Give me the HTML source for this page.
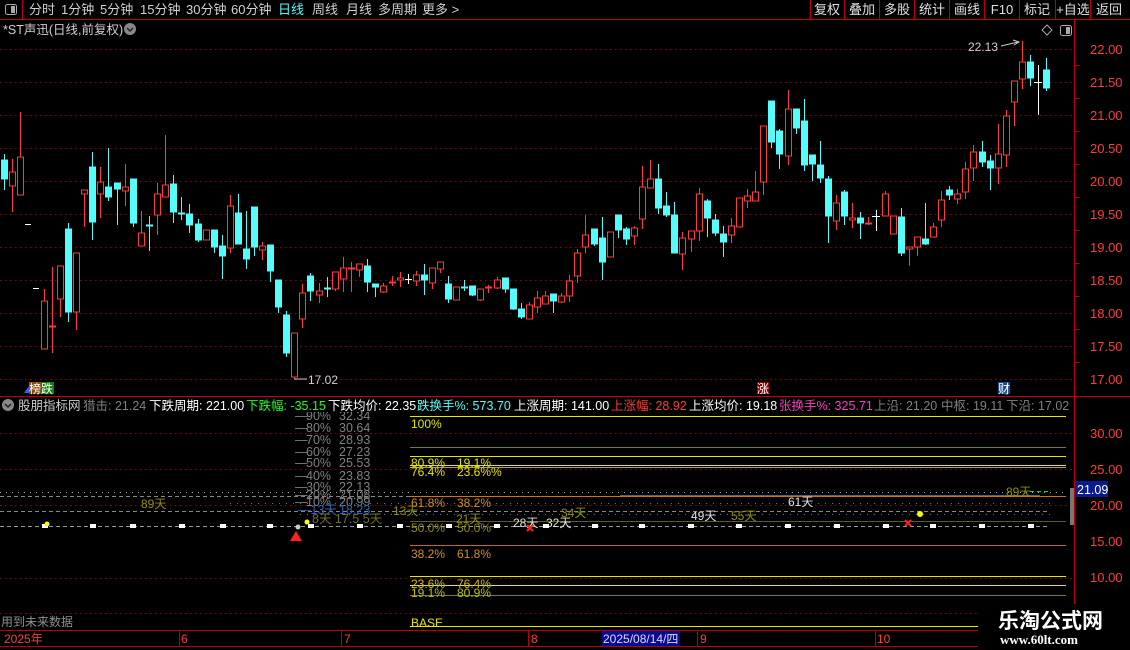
<!DOCTYPE html>
<html><head><meta charset="utf-8"><style>
html,body{margin:0;padding:0;background:#000;width:1130px;height:650px;overflow:hidden}
svg{display:block}
text{font-family:"Liberation Sans","Noto Sans CJK SC",sans-serif;}
</style></head><body>
<svg width="1130" height="650" viewBox="0 0 1130 650" xmlns="http://www.w3.org/2000/svg">
<rect width="1130" height="650" fill="#000"/>
<!-- top bar -->
<line x1="0" y1="19.5" x2="1130" y2="19.5" stroke="#c00000"/>
<line x1="22.5" y1="0" x2="22.5" y2="19" stroke="#c00000"/>
<rect x="5.5" y="4.5" width="11" height="10" rx="2" fill="none" stroke="#aaa"/>
<rect x="11" y="6" width="4" height="7" fill="#aaa"/>
<g font-size="13" fill="#d0d0d0">
<text x="29" y="14">分时</text><text x="61" y="14">1分钟</text><text x="100" y="14">5分钟</text><text x="140" y="14">15分钟</text><text x="186" y="14">30分钟</text><text x="231" y="14">60分钟</text><text x="278" y="14" fill="#54fcfc">日线</text><text x="312" y="14">周线</text><text x="346" y="14">月线</text><text x="378" y="14">多周期</text><text x="422" y="14">更多 &gt;</text>
</g>
<g stroke="#c00000"><line x1="810.5" y1="0" x2="810.5" y2="19"/><line x1="844.5" y1="0" x2="844.5" y2="19"/><line x1="879.5" y1="0" x2="879.5" y2="19"/><line x1="914.5" y1="0" x2="914.5" y2="19"/><line x1="949.5" y1="0" x2="949.5" y2="19"/><line x1="984.5" y1="0" x2="984.5" y2="19"/><line x1="1019.5" y1="0" x2="1019.5" y2="19"/><line x1="1055.5" y1="0" x2="1055.5" y2="19"/><line x1="1090.5" y1="0" x2="1090.5" y2="19"/></g>
<g font-size="13" fill="#e0e0e0" text-anchor="middle">
<text x="827" y="14">复权</text><text x="862" y="14">叠加</text><text x="897" y="14">多股</text><text x="932" y="14">统计</text><text x="967" y="14">画线</text><text x="1002" y="14">F10</text><text x="1037" y="14">标记</text><text x="1073" y="14">+自选</text><text x="1109" y="14">返回</text>
</g>
<text x="3" y="34" font-size="12.5" fill="#d0d0d0">*ST声迅(日线,前复权)</text>
<circle cx="130" cy="29" r="6" fill="#888"/><path d="M127 28 L130 31 L133 28" stroke="#222" stroke-width="1.5" fill="none"/>
<path d="M1047 25 L1052 30 L1047 35 L1042 30 Z" fill="none" stroke="#aaa"/>
<rect x="1060.5" y="25.5" width="11" height="10" rx="2" fill="none" stroke="#aaa"/><rect x="1066" y="27" width="4" height="7" fill="#aaa"/>
<!-- axis -->
<line x1="1074.5" y1="20" x2="1074.5" y2="646" stroke="#c00000"/>
<g stroke="#900" stroke-dasharray="1.5,3.5">
<line x1="0" y1="49.5" x2="1074" y2="49.5"/><line x1="0" y1="82.5" x2="1074" y2="82.5"/><line x1="0" y1="115.5" x2="1074" y2="115.5"/><line x1="0" y1="148.5" x2="1074" y2="148.5"/><line x1="0" y1="181.5" x2="1074" y2="181.5"/><line x1="0" y1="214.5" x2="1074" y2="214.5"/><line x1="0" y1="247.5" x2="1074" y2="247.5"/><line x1="0" y1="280.5" x2="1074" y2="280.5"/><line x1="0" y1="313.5" x2="1074" y2="313.5"/><line x1="0" y1="346.5" x2="1074" y2="346.5"/><line x1="0" y1="379.5" x2="1074" y2="379.5"/>
<line x1="0" y1="433.5" x2="1074" y2="433.5"/><line x1="0" y1="469.5" x2="1074" y2="469.5"/><line x1="0" y1="505.5" x2="1074" y2="505.5"/><line x1="0" y1="578.5" x2="1074" y2="578.5"/><line x1="0" y1="613.5" x2="1074" y2="613.5"/>
</g>
<g font-size="13" fill="#ff3c3c">
<text x="1090" y="54">22.00</text><text x="1090" y="87">21.50</text><text x="1090" y="120">21.00</text><text x="1090" y="153">20.50</text><text x="1090" y="186">20.00</text><text x="1090" y="219">19.50</text><text x="1090" y="252">19.00</text><text x="1090" y="285">18.50</text><text x="1090" y="318">18.00</text><text x="1090" y="351">17.50</text><text x="1090" y="384">17.00</text>
<text x="1090" y="438">30.00</text><text x="1090" y="474">25.00</text><text x="1090" y="510">20.00</text><text x="1090" y="546">15.00</text><text x="1090" y="582">10.00</text>
</g>
<g stroke="#c00000"><line x1="1074" y1="65.5" x2="1079" y2="65.5"/><line x1="1074" y1="98.5" x2="1079" y2="98.5"/><line x1="1074" y1="131.5" x2="1079" y2="131.5"/><line x1="1074" y1="164.5" x2="1079" y2="164.5"/><line x1="1074" y1="197.5" x2="1079" y2="197.5"/><line x1="1074" y1="230.5" x2="1079" y2="230.5"/><line x1="1074" y1="263.5" x2="1079" y2="263.5"/><line x1="1074" y1="296.5" x2="1079" y2="296.5"/><line x1="1074" y1="329.5" x2="1079" y2="329.5"/><line x1="1074" y1="362.5" x2="1079" y2="362.5"/></g>
<!-- candles red -->
<g stroke="#ff3c3c" fill="#000" shape-rendering="crispEdges">
<line x1="12.5" y1="159" x2="12.5" y2="212"/><rect x="9.5" y="172" width="6" height="14"/>
<line x1="20.5" y1="112" x2="20.5" y2="195"/><rect x="17.5" y="157" width="6" height="38"/>
<line x1="44.5" y1="289" x2="44.5" y2="349"/><rect x="41.5" y="301" width="6" height="48"/>
<line x1="52.5" y1="267" x2="52.5" y2="353"/><rect x="49.5" y="326" width="6" height="1"/>
<line x1="60.5" y1="266" x2="60.5" y2="317"/><rect x="57.5" y="266" width="6" height="33"/>
<line x1="76.5" y1="253" x2="76.5" y2="330"/><rect x="73.5" y="253" width="6" height="59"/>
<line x1="84.5" y1="190" x2="84.5" y2="227"/><rect x="81.5" y="190" width="6" height="4"/>
<line x1="100.5" y1="167" x2="100.5" y2="218"/><rect x="97.5" y="182" width="6" height="12"/>
<line x1="125.5" y1="164" x2="125.5" y2="206"/><rect x="122.5" y="187" width="6" height="4"/>
<line x1="141.5" y1="211" x2="141.5" y2="246"/><rect x="138.5" y="233" width="6" height="13"/>
<line x1="157.5" y1="183" x2="157.5" y2="235"/><rect x="154.5" y="194" width="6" height="21"/>
<line x1="165.5" y1="135" x2="165.5" y2="197"/><rect x="162.5" y="185" width="6" height="12"/>
<line x1="206.5" y1="230" x2="206.5" y2="240"/><rect x="203.5" y="230" width="6" height="10"/>
<line x1="230.5" y1="195" x2="230.5" y2="253"/><rect x="227.5" y="206" width="6" height="42"/>
<line x1="262.5" y1="242" x2="262.5" y2="260"/><rect x="259.5" y="246" width="6" height="4"/>
<line x1="294.5" y1="333" x2="294.5" y2="379"/><rect x="291.5" y="333" width="6" height="44"/>
<line x1="302.5" y1="284" x2="302.5" y2="328"/><rect x="299.5" y="293" width="6" height="26"/>
<line x1="319.5" y1="283" x2="319.5" y2="303"/><rect x="316.5" y="291" width="6" height="4"/>
<line x1="335.5" y1="272" x2="335.5" y2="291"/><rect x="332.5" y="272" width="6" height="17"/>
<line x1="343.5" y1="257" x2="343.5" y2="292"/><rect x="340.5" y="268" width="6" height="11"/>
<line x1="351.5" y1="262" x2="351.5" y2="292"/><rect x="348.5" y="268" width="6" height="1"/>
<line x1="359.5" y1="264" x2="359.5" y2="277"/><rect x="356.5" y="264" width="6" height="6"/>
<line x1="383.5" y1="283" x2="383.5" y2="293"/><rect x="380.5" y="286" width="6" height="6"/>
<line x1="392.5" y1="276" x2="392.5" y2="286"/><rect x="389.5" y="282" width="6" height="1"/>
<line x1="400.5" y1="272" x2="400.5" y2="287"/><rect x="397.5" y="278" width="6" height="2"/>
<line x1="416.5" y1="271" x2="416.5" y2="286"/><rect x="413.5" y="275" width="6" height="6"/>
<line x1="432.5" y1="268" x2="432.5" y2="289"/><rect x="429.5" y="268" width="6" height="15"/>
<line x1="440.5" y1="262" x2="440.5" y2="273"/><rect x="437.5" y="262" width="6" height="7"/>
<line x1="456.5" y1="287" x2="456.5" y2="300"/><rect x="453.5" y="287" width="6" height="13"/>
<line x1="480.5" y1="289" x2="480.5" y2="301"/><rect x="477.5" y="289" width="6" height="11"/>
<line x1="488.5" y1="285" x2="488.5" y2="293"/><rect x="485.5" y="287" width="6" height="1"/>
<line x1="497.5" y1="277" x2="497.5" y2="289"/><rect x="494.5" y="280" width="6" height="8"/>
<line x1="529.5" y1="302" x2="529.5" y2="319"/><rect x="526.5" y="305" width="6" height="14"/>
<line x1="537.5" y1="291" x2="537.5" y2="313"/><rect x="534.5" y="298" width="6" height="9"/>
<line x1="545.5" y1="291" x2="545.5" y2="304"/><rect x="542.5" y="296" width="6" height="8"/>
<line x1="561.5" y1="293" x2="561.5" y2="303"/><rect x="558.5" y="296" width="6" height="6"/>
<line x1="569.5" y1="275" x2="569.5" y2="302"/><rect x="566.5" y="281" width="6" height="15"/>
<line x1="577.5" y1="249" x2="577.5" y2="283"/><rect x="574.5" y="253" width="6" height="23"/>
<line x1="585.5" y1="215" x2="585.5" y2="253"/><rect x="582.5" y="235" width="6" height="12"/>
<line x1="610.5" y1="232" x2="610.5" y2="257"/><rect x="607.5" y="232" width="6" height="25"/>
<line x1="634.5" y1="226" x2="634.5" y2="245"/><rect x="631.5" y="228" width="6" height="8"/>
<line x1="642.5" y1="166" x2="642.5" y2="229"/><rect x="639.5" y="187" width="6" height="32"/>
<line x1="650.5" y1="160" x2="650.5" y2="188"/><rect x="647.5" y="179" width="6" height="9"/>
<line x1="682.5" y1="232" x2="682.5" y2="270"/><rect x="679.5" y="238" width="6" height="16"/>
<line x1="691.5" y1="231" x2="691.5" y2="252"/><rect x="688.5" y="231" width="6" height="8"/>
<line x1="699.5" y1="188" x2="699.5" y2="241"/><rect x="696.5" y="194" width="6" height="37"/>
<line x1="731.5" y1="218" x2="731.5" y2="243"/><rect x="728.5" y="226" width="6" height="9"/>
<line x1="739.5" y1="198" x2="739.5" y2="227"/><rect x="736.5" y="198" width="6" height="29"/>
<line x1="747.5" y1="189" x2="747.5" y2="208"/><rect x="744.5" y="196" width="6" height="5"/>
<line x1="755.5" y1="171" x2="755.5" y2="201"/><rect x="752.5" y="192" width="6" height="9"/>
<line x1="763.5" y1="126" x2="763.5" y2="195"/><rect x="760.5" y="126" width="6" height="56"/>
<line x1="788.5" y1="90" x2="788.5" y2="165"/><rect x="785.5" y="109" width="6" height="47"/>
<line x1="836.5" y1="195" x2="836.5" y2="230"/><rect x="833.5" y="203" width="6" height="18"/>
<line x1="852.5" y1="203" x2="852.5" y2="228"/><rect x="849.5" y="218" width="6" height="2"/>
<line x1="868.5" y1="217" x2="868.5" y2="225"/><rect x="865.5" y="223" width="6" height="1"/>
<line x1="885.5" y1="191" x2="885.5" y2="216"/><rect x="882.5" y="194" width="6" height="22"/>
<line x1="893.5" y1="216" x2="893.5" y2="234"/><rect x="890.5" y="216" width="6" height="18"/>
<line x1="909.5" y1="247" x2="909.5" y2="266"/><rect x="906.5" y="247" width="6" height="2"/>
<line x1="917.5" y1="237" x2="917.5" y2="256"/><rect x="914.5" y="237" width="6" height="10"/>
<line x1="933.5" y1="223" x2="933.5" y2="237"/><rect x="930.5" y="227" width="6" height="10"/>
<line x1="941.5" y1="191" x2="941.5" y2="227"/><rect x="938.5" y="200" width="6" height="20"/>
<line x1="957.5" y1="189" x2="957.5" y2="204"/><rect x="954.5" y="194" width="6" height="5"/>
<line x1="965.5" y1="162" x2="965.5" y2="199"/><rect x="962.5" y="169" width="6" height="23"/>
<line x1="973.5" y1="145" x2="973.5" y2="181"/><rect x="970.5" y="152" width="6" height="16"/>
<line x1="998.5" y1="124" x2="998.5" y2="184"/><rect x="995.5" y="154" width="6" height="14"/>
<line x1="1006.5" y1="110" x2="1006.5" y2="167"/><rect x="1003.5" y="116" width="6" height="39"/>
<line x1="1014.5" y1="81" x2="1014.5" y2="126"/><rect x="1011.5" y="81" width="6" height="21"/>
<line x1="1022.5" y1="41" x2="1022.5" y2="89"/><rect x="1019.5" y="62" width="6" height="17"/>
</g>
<!-- candles cyan -->
<g stroke="#54fcfc" fill="#54fcfc" shape-rendering="crispEdges">
<line x1="4.5" y1="154" x2="4.5" y2="190"/><rect x="1.5" y="160" width="6" height="19"/>
<line x1="68.5" y1="223" x2="68.5" y2="322"/><rect x="65.5" y="229" width="6" height="83"/>
<line x1="92.5" y1="152" x2="92.5" y2="240"/><rect x="89.5" y="167" width="6" height="55"/>
<line x1="108.5" y1="148" x2="108.5" y2="201"/><rect x="105.5" y="187" width="6" height="10"/>
<line x1="117.5" y1="183" x2="117.5" y2="225"/><rect x="114.5" y="183" width="6" height="6"/>
<line x1="133.5" y1="179" x2="133.5" y2="227"/><rect x="130.5" y="179" width="6" height="44"/>
<line x1="149.5" y1="216" x2="149.5" y2="251"/><rect x="146.5" y="225" width="6" height="1"/>
<line x1="173.5" y1="175" x2="173.5" y2="223"/><rect x="170.5" y="184" width="6" height="28"/>
<line x1="181.5" y1="197" x2="181.5" y2="220"/><rect x="178.5" y="213" width="6" height="1"/>
<line x1="189.5" y1="204" x2="189.5" y2="233"/><rect x="186.5" y="214" width="6" height="11"/>
<line x1="198.5" y1="219" x2="198.5" y2="242"/><rect x="195.5" y="224" width="6" height="16"/>
<line x1="214.5" y1="230" x2="214.5" y2="253"/><rect x="211.5" y="230" width="6" height="17"/>
<line x1="222.5" y1="235" x2="222.5" y2="279"/><rect x="219.5" y="246" width="6" height="10"/>
<line x1="238.5" y1="194" x2="238.5" y2="244"/><rect x="235.5" y="213" width="6" height="31"/>
<line x1="246.5" y1="211" x2="246.5" y2="269"/><rect x="243.5" y="249" width="6" height="10"/>
<line x1="254.5" y1="207" x2="254.5" y2="256"/><rect x="251.5" y="207" width="6" height="40"/>
<line x1="270.5" y1="245" x2="270.5" y2="282"/><rect x="267.5" y="245" width="6" height="26"/>
<line x1="278.5" y1="280" x2="278.5" y2="313"/><rect x="275.5" y="280" width="6" height="27"/>
<line x1="286.5" y1="311" x2="286.5" y2="357"/><rect x="283.5" y="315" width="6" height="38"/>
<line x1="310.5" y1="273" x2="310.5" y2="301"/><rect x="307.5" y="276" width="6" height="15"/>
<line x1="327.5" y1="277" x2="327.5" y2="297"/><rect x="324.5" y="288" width="6" height="1"/>
<line x1="367.5" y1="259" x2="367.5" y2="292"/><rect x="364.5" y="266" width="6" height="16"/>
<line x1="375.5" y1="284" x2="375.5" y2="297"/><rect x="372.5" y="284" width="6" height="3"/>
<line x1="424.5" y1="264" x2="424.5" y2="295"/><rect x="421.5" y="275" width="6" height="5"/>
<line x1="448.5" y1="276" x2="448.5" y2="303"/><rect x="445.5" y="284" width="6" height="15"/>
<line x1="464.5" y1="280" x2="464.5" y2="291"/><rect x="461.5" y="287" width="6" height="1"/>
<line x1="472.5" y1="286" x2="472.5" y2="296"/><rect x="469.5" y="286" width="6" height="9"/>
<line x1="505.5" y1="278" x2="505.5" y2="293"/><rect x="502.5" y="278" width="6" height="11"/>
<line x1="513.5" y1="289" x2="513.5" y2="310"/><rect x="510.5" y="289" width="6" height="20"/>
<line x1="521.5" y1="303" x2="521.5" y2="319"/><rect x="518.5" y="309" width="6" height="8"/>
<line x1="553.5" y1="294" x2="553.5" y2="313"/><rect x="550.5" y="294" width="6" height="7"/>
<line x1="594.5" y1="229" x2="594.5" y2="246"/><rect x="591.5" y="229" width="6" height="15"/>
<line x1="602.5" y1="217" x2="602.5" y2="280"/><rect x="599.5" y="238" width="6" height="24"/>
<line x1="618.5" y1="215" x2="618.5" y2="238"/><rect x="615.5" y="215" width="6" height="15"/>
<line x1="626.5" y1="227" x2="626.5" y2="245"/><rect x="623.5" y="229" width="6" height="10"/>
<line x1="658.5" y1="164" x2="658.5" y2="214"/><rect x="655.5" y="179" width="6" height="29"/>
<line x1="666.5" y1="192" x2="666.5" y2="217"/><rect x="663.5" y="206" width="6" height="9"/>
<line x1="674.5" y1="202" x2="674.5" y2="253"/><rect x="671.5" y="215" width="6" height="38"/>
<line x1="707.5" y1="199" x2="707.5" y2="237"/><rect x="704.5" y="201" width="6" height="17"/>
<line x1="715.5" y1="214" x2="715.5" y2="236"/><rect x="712.5" y="220" width="6" height="13"/>
<line x1="723.5" y1="226" x2="723.5" y2="257"/><rect x="720.5" y="234" width="6" height="8"/>
<line x1="771.5" y1="101" x2="771.5" y2="148"/><rect x="768.5" y="101" width="6" height="41"/>
<line x1="779.5" y1="129" x2="779.5" y2="169"/><rect x="776.5" y="131" width="6" height="23"/>
<line x1="796.5" y1="109" x2="796.5" y2="134"/><rect x="793.5" y="109" width="6" height="19"/>
<line x1="804.5" y1="99" x2="804.5" y2="171"/><rect x="801.5" y="121" width="6" height="44"/>
<line x1="812.5" y1="155" x2="812.5" y2="181"/><rect x="809.5" y="155" width="6" height="9"/>
<line x1="820.5" y1="141" x2="820.5" y2="183"/><rect x="817.5" y="165" width="6" height="13"/>
<line x1="828.5" y1="176" x2="828.5" y2="243"/><rect x="825.5" y="179" width="6" height="37"/>
<line x1="844.5" y1="190" x2="844.5" y2="225"/><rect x="841.5" y="192" width="6" height="24"/>
<line x1="860.5" y1="212" x2="860.5" y2="239"/><rect x="857.5" y="218" width="6" height="5"/>
<line x1="901.5" y1="208" x2="901.5" y2="256"/><rect x="898.5" y="217" width="6" height="36"/>
<line x1="925.5" y1="203" x2="925.5" y2="245"/><rect x="922.5" y="239" width="6" height="5"/>
<line x1="949.5" y1="186" x2="949.5" y2="200"/><rect x="946.5" y="190" width="6" height="5"/>
<line x1="982.5" y1="141" x2="982.5" y2="167"/><rect x="979.5" y="152" width="6" height="10"/>
<line x1="990.5" y1="155" x2="990.5" y2="190"/><rect x="987.5" y="161" width="6" height="7"/>
<line x1="1030.5" y1="55" x2="1030.5" y2="86"/><rect x="1027.5" y="62" width="6" height="16"/>
<line x1="1046.5" y1="58" x2="1046.5" y2="91"/><rect x="1043.5" y="70" width="6" height="18"/>
</g>
<g stroke="#fff" shape-rendering="crispEdges">
<line x1="25" y1="224.5" x2="31" y2="224.5"/><line x1="33" y1="288.5" x2="39" y2="288.5"/>
<line x1="408.5" y1="274" x2="408.5" y2="284"/><line x1="405" y1="279.5" x2="412" y2="279.5"/>
<line x1="876.5" y1="210" x2="876.5" y2="231"/><line x1="872" y1="216.5" x2="880" y2="216.5"/>
<line x1="1038.5" y1="65" x2="1038.5" y2="115"/><line x1="1034" y1="82.5" x2="1042" y2="82.5"/>
</g>
<text x="968" y="51" font-size="12" fill="#d0d0d0">22.13</text>
<path d="M1001 46 L1018 42 M1013 40 L1019 42 L1014 45" stroke="#ccc" fill="none"/>
<path d="M294 379 L307 379" stroke="#ccc"/><text x="308" y="384" font-size="12" fill="#d0d0d0">17.02</text>
<!-- markers -->
<path d="M24 393 L29 386 L29 393 Z" fill="#3060ff"/>
<rect x="29" y="382" width="12" height="12" fill="#8b4a10"/><text x="29" y="393" font-size="12" fill="#fff">榜</text>
<rect x="41" y="382" width="13" height="12" fill="#108010"/><text x="41" y="393" font-size="12" fill="#fff">跌</text>
<rect x="757" y="382" width="12" height="12" fill="#8b0000"/><text x="757" y="393" font-size="12" fill="#fff">涨</text>
<rect x="998" y="382" width="12" height="12" fill="#1e4a90"/><text x="998" y="393" font-size="12" fill="#fff">财</text>
<!-- separator -->
<line x1="0" y1="396.5" x2="1130" y2="396.5" stroke="#c00000"/>
<!-- lower panel lines -->
<g shape-rendering="crispEdges">
<line x1="410" y1="416.5" x2="1066" y2="416.5" stroke="#e6e600"/>
<line x1="410" y1="447.5" x2="1066" y2="447.5" stroke="#808000"/>
<line x1="410" y1="456.5" x2="1066" y2="456.5" stroke="#e6e600"/>
<line x1="410" y1="465.5" x2="1066" y2="465.5" stroke="#e6e600"/>
<line x1="410" y1="467.5" x2="1066" y2="467.5" stroke="#b0b000"/>
<line x1="0" y1="492.5" x2="1066" y2="492.5" stroke="#aaa" stroke-dasharray="1,5"/>
<line x1="0" y1="496.5" x2="410" y2="496.5" stroke="#888" stroke-dasharray="4,3"/>
<line x1="410" y1="496.5" x2="1066" y2="496.5" stroke="#d07010"/>
<line x1="620" y1="495.5" x2="1040" y2="495.5" stroke="#506080"/>
<line x1="230" y1="503.5" x2="1050" y2="503.5" stroke="#2080c0" stroke-dasharray="1,6"/>
<line x1="0" y1="511.5" x2="1050" y2="511.5" stroke="#888" stroke-dasharray="4,3"/>
<line x1="300" y1="514.5" x2="1050" y2="514.5" stroke="#2080c0" stroke-dasharray="1,6"/>
<line x1="410" y1="521.5" x2="1066" y2="521.5" stroke="#606000"/>
<line x1="0" y1="526.5" x2="1050" y2="526.5" stroke="#999" stroke-dasharray="4,3"/>
<line x1="410" y1="545.5" x2="1066" y2="545.5" stroke="#c07010"/>
<line x1="410" y1="576.5" x2="1066" y2="576.5" stroke="#e6e600"/>
<line x1="410" y1="585.5" x2="1066" y2="585.5" stroke="#e6e600"/>
<line x1="410" y1="595.5" x2="1066" y2="595.5" stroke="#808000"/>
<line x1="410" y1="626.5" x2="978" y2="626.5" stroke="#e6e600"/>
</g>
<g font-size="12">
<text x="411" y="428" fill="#e6e600">100%</text>
<text x="411" y="467" fill="#e6e600">80.9%</text><text x="457" y="467" fill="#e6e600">19.1%</text>
<text x="411" y="476" fill="#e6e600">76.4%</text><text x="457" y="476" fill="#e6e600">23.6%%</text>
<text x="411" y="507" fill="#d09020">61.8%</text><text x="457" y="507" fill="#d09020">38.2%</text>
<text x="411" y="532" fill="#909000">50.0%</text><text x="457" y="532" fill="#909000">50.0%</text>
<text x="411" y="558" fill="#d09020">38.2%</text><text x="457" y="558" fill="#d09020">61.8%</text>
<text x="411" y="588" fill="#d0c000">23.6%</text><text x="457" y="588" fill="#d0c000">76.4%</text>
<text x="411" y="597" fill="#c0c000">19.1%</text><text x="457" y="597" fill="#c0c000">80.9%</text>
<text x="411" y="627" fill="#e6e600">BASE</text>
</g>
<g font-size="12.5" fill="#808080">
<text x="295" y="420">—</text><text x="306" y="420">90%</text><text x="339" y="420">32.34</text>
<text x="295" y="432">—</text><text x="306" y="432">80%</text><text x="339" y="432">30.64</text>
<text x="295" y="444">—</text><text x="306" y="444">70%</text><text x="339" y="444">28.93</text>
<text x="295" y="456">—</text><text x="306" y="456">60%</text><text x="339" y="456">27.23</text>
<text x="295" y="467">—</text><text x="306" y="467">50%</text><text x="339" y="467">25.53</text>
<text x="295" y="480">—</text><text x="306" y="480">40%</text><text x="339" y="480">23.83</text>
<text x="295" y="491">—</text><text x="306" y="491">30%</text><text x="339" y="491">22.13</text>
<text x="295" y="499">—</text><text x="306" y="499">20%</text><text x="339" y="499">21.08</text>
<text x="295" y="506">—</text><text x="306" y="506">10%</text><text x="339" y="506">20.99</text>
<text x="298" y="514" fill="#3060b0">—13天</text><text x="339" y="514" fill="#3060b0">18.23</text>
<text x="312" y="523" fill="#707020">8天 17.5 5天</text>
</g>
<!-- indicator header -->
<rect x="0" y="397" width="1074" height="15" fill="#000"/>
<circle cx="8" cy="405" r="6" fill="#888"/><path d="M5 404 L8 407 L11 404" stroke="#222" stroke-width="1.5" fill="none"/>
<g font-size="12.5">
<text x="18" y="410" fill="#ccc">股朋指标网</text>
<text x="83" y="410" fill="#808080">猎击: 21.24</text>
<text x="149" y="410" fill="#fff">下跌周期: 221.00</text>
<text x="246" y="410" fill="#20ff20">下跌幅: -35.15</text>
<text x="328" y="410" fill="#fff">下跌均价: 22.35</text>
<text x="417" y="410" fill="#54fcfc">跌换手%: 573.70</text>
<text x="514" y="410" fill="#fff">上涨周期: 141.00</text>
<text x="611" y="410" fill="#ff3c3c">上涨幅: 28.92</text>
<text x="689" y="410" fill="#fff">上涨均价: 19.18</text>
<text x="779" y="410" fill="#ff3cc8">张换手%: 325.71</text>
<text x="874" y="410" fill="#808080">上沿: 21.20</text>
<text x="941" y="410" fill="#808080">中枢: 19.11</text>
<text x="1006" y="410" fill="#808080">下沿: 17.02</text>
</g>
<g font-size="12">
<text x="141" y="508" fill="#909000">89天</text>
<text x="393" y="515" fill="#909000">13天</text>
<text x="456" y="523" fill="#909000">21天</text>
<text x="513" y="527" fill="#e0e0e0">28天</text>
<text x="546" y="527" fill="#e0e0e0">32天</text>
<text x="561" y="517" fill="#909000">34天</text>
<text x="691" y="520" fill="#e0e0e0">49天</text>
<text x="731" y="520" fill="#909000">55天</text>
<text x="788" y="506" fill="#e0e0e0">61天</text>
<text x="1006" y="496" fill="#909000">89天</text>
</g>
<line x1="1030" y1="491.5" x2="1050" y2="491.5" stroke="#20d020" stroke-dasharray="4,3"/>
<g fill="#fff">
<rect x="42" y="524" width="6" height="4"/><rect x="90" y="524" width="6" height="4"/><rect x="130" y="524" width="6" height="4"/><rect x="179" y="524" width="6" height="4"/><rect x="220" y="524" width="6" height="4"/><rect x="267" y="524" width="6" height="4"/><rect x="308" y="524" width="6" height="4"/><rect x="357" y="524" width="6" height="4"/><rect x="397" y="524" width="6" height="4"/><rect x="446" y="524" width="6" height="4"/><rect x="494" y="524" width="6" height="4"/><rect x="543" y="524" width="6" height="4"/><rect x="592" y="524" width="6" height="4"/><rect x="639" y="524" width="6" height="4"/><rect x="688" y="524" width="6" height="4"/><rect x="736" y="524" width="6" height="4"/><rect x="785" y="524" width="6" height="4"/><rect x="834" y="524" width="6" height="4"/><rect x="883" y="524" width="6" height="4"/><rect x="930" y="524" width="6" height="4"/><rect x="979" y="524" width="6" height="4"/><rect x="1028" y="524" width="6" height="4"/>
</g>
<circle cx="47" cy="524" r="2.5" fill="#ff0"/><circle cx="920" cy="514" r="3" fill="#ff0"/><circle cx="307" cy="522" r="2.5" fill="#ff0"/>
<circle cx="298" cy="527" r="2.5" fill="#ccc"/>
<path d="M527 525 L533 531 M533 525 L527 531" stroke="#ff2020" stroke-width="2"/>
<path d="M905 520 L911 526 M911 520 L905 526" stroke="#ff2020" stroke-width="2"/>
<path d="M296 531 L302 541 L290 541 Z" fill="#ff2020"/>
<rect x="1075" y="481" width="33" height="16" fill="#0a1a90"/>
<text x="1077" y="494" font-size="12.5" fill="#fff">21.09</text>
<rect x="1070" y="488" width="4" height="37" fill="#777"/>
<text x="1" y="626" font-size="12" fill="#909090">用到未来数据</text>
<!-- date bar -->
<line x1="0" y1="630.5" x2="1130" y2="630.5" stroke="#c00000"/>
<line x1="0" y1="646.5" x2="1130" y2="646.5" stroke="#c00000"/>
<g stroke="#c00000"><line x1="179.5" y1="631" x2="179.5" y2="646"/><line x1="341.5" y1="631" x2="341.5" y2="646"/><line x1="528.5" y1="631" x2="528.5" y2="646"/><line x1="697.5" y1="631" x2="697.5" y2="646"/><line x1="875.5" y1="631" x2="875.5" y2="646"/></g>
<g font-size="12" fill="#ff3c3c">
<text x="4" y="643">2025年</text><text x="181" y="643">6</text><text x="344" y="643">7</text><text x="531" y="643">8</text><text x="700" y="643">9</text><text x="877" y="643">10</text>
</g>
<rect x="602" y="631" width="78" height="15" fill="#0a0a9a"/>
<text x="603" y="643" font-size="12" fill="#ddd">2025/08/14/四</text>
<!-- watermark -->
<rect x="978" y="604" width="152" height="46" fill="#000"/>
<text x="998" y="628" font-size="21" font-weight="bold" fill="#fff">乐淘公式网</text>
<text x="1000" y="644" font-size="13" font-weight="bold" fill="#fff" style="font-family:'Liberation Serif',serif">www.60lt.com</text>
</svg>
</body></html>
